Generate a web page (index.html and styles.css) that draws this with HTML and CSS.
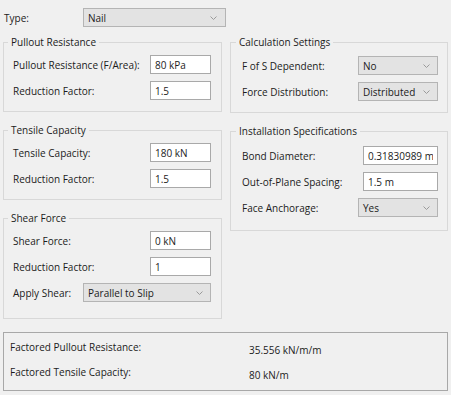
FILE: index.html
```html
<!DOCTYPE html>
<html lang="en">
<head>
    <meta charset="UTF-8">
    <title>Support Properties - Nail</title>
    <link rel="stylesheet" href="styles.css">
</head>
<body>
    <div class="dialog">
        <div class="type-row">
            <label class="type-label">Type:</label>
            <div class="combo combo-type"><span>Nail</span><svg class="chev" width="7" height="4" viewBox="0 0 7 4"><path d="M0.5 0.5 L3.5 3.5 L6.5 0.5" fill="none" stroke="#9a9a9a" stroke-width="1"/></svg></div>
        </div>

        <div class="columns">
            <div class="column column-left">
                <fieldset class="group">
                    <legend>Pullout Resistance</legend>
                    <div class="field">
                        <label>Pullout Resistance (F/Area):</label>
                        <input class="text-box" type="text" value="80 kPa">
                    </div>
                    <div class="field">
                        <label>Reduction Factor:</label>
                        <input class="text-box" type="text" value="1.5">
                    </div>
                </fieldset>

                <fieldset class="group">
                    <legend>Tensile Capacity</legend>
                    <div class="field">
                        <label>Tensile Capacity:</label>
                        <input class="text-box" type="text" value="180 kN">
                    </div>
                    <div class="field">
                        <label>Reduction Factor:</label>
                        <input class="text-box" type="text" value="1.5">
                    </div>
                </fieldset>

                <fieldset class="group group-shear">
                    <legend>Shear Force</legend>
                    <div class="field">
                        <label>Shear Force:</label>
                        <input class="text-box" type="text" value="0 kN">
                    </div>
                    <div class="field">
                        <label>Reduction Factor:</label>
                        <input class="text-box" type="text" value="1">
                    </div>
                    <div class="field">
                        <label>Apply Shear:</label>
                        <div class="combo combo-wide"><span>Parallel to Slip</span><svg class="chev" width="7" height="4" viewBox="0 0 7 4"><path d="M0.5 0.5 L3.5 3.5 L6.5 0.5" fill="none" stroke="#9a9a9a" stroke-width="1"/></svg></div>
                    </div>
                </fieldset>
            </div>

            <div class="column column-right">
                <fieldset class="group">
                    <legend>Calculation Settings</legend>
                    <div class="field">
                        <label>F of S Dependent:</label>
                        <div class="combo combo-small"><span>No</span><svg class="chev" width="7" height="4" viewBox="0 0 7 4"><path d="M0.5 0.5 L3.5 3.5 L6.5 0.5" fill="none" stroke="#9a9a9a" stroke-width="1"/></svg></div>
                    </div>
                    <div class="field">
                        <label>Force Distribution:</label>
                        <div class="combo combo-small"><span>Distributed</span><svg class="chev" width="7" height="4" viewBox="0 0 7 4"><path d="M0.5 0.5 L3.5 3.5 L6.5 0.5" fill="none" stroke="#9a9a9a" stroke-width="1"/></svg></div>
                    </div>
                </fieldset>

                <fieldset class="group group-install">
                    <legend>Installation Specifications</legend>
                    <div class="field">
                        <label>Bond Diameter:</label>
                        <input class="text-box text-box-wide" type="text" value="0.31830989 m">
                    </div>
                    <div class="field">
                        <label>Out-of-Plane Spacing:</label>
                        <input class="text-box text-box-wide" type="text" value="1.5 m">
                    </div>
                    <div class="field">
                        <label>Face Anchorage:</label>
                        <div class="combo combo-small"><span>Yes</span><svg class="chev" width="7" height="4" viewBox="0 0 7 4"><path d="M0.5 0.5 L3.5 3.5 L6.5 0.5" fill="none" stroke="#9a9a9a" stroke-width="1"/></svg></div>
                    </div>
                </fieldset>
            </div>
        </div>

        <div class="results">
            <div class="result-label">Factored Pullout Resistance:</div>
            <div class="result-value">35.556 kN/m/m</div>
            <div class="result-label">Factored Tensile Capacity:</div>
            <div class="result-value">80 kN/m</div>
        </div>
    </div>
</body>
</html>
```

FILE: styles.css
```css
body {
    margin: 0;
    background-color: #f0f0f0;
    font-family: 'Open Sans', 'Liberation Sans', sans-serif;
    font-size: 10px;
    color: #1b1b1b;
}

.dialog {
    width: 445px;
    padding: 8px 3px 0 3px;
}

/* Type selector on top */
.type-row {
    display: flex;
    align-items: center;
    height: 19px;
}

.type-label {
    width: 79px;
    padding-left: 1px;
}

.combo {
    display: flex;
    align-items: center;
    justify-content: space-between;
    box-sizing: border-box;
    height: 19px;
    padding: 0 7px 0 4px;
    background-color: #e3e3e3;
    border: 1px solid #b4b4b4;
    color: #1b1b1b;
}

.combo-type {
    width: 143px;
    padding-right: 8px;
}

.combo-small {
    width: 80px;
}

.combo-wide {
    width: 128px;
}

.chev {
    display: block;
}

/* Two columns of group boxes */
.columns {
    display: flex;
    gap: 8px;
    margin-top: 8px;
}

.column {
    display: flex;
    flex-direction: column;
    gap: 11px;
}

.column-left {
    width: 219px;
}

.column-right {
    width: 218px;
}

.group {
    margin: 0;
    min-width: 0;
    border: 1px solid #d8d8d8;
    padding: 6px 10px 11px 9px;
}

.column-right .group {
    padding: 7px 9px 11px 11px;
}

.group legend {
    line-height: 14px;
    padding: 0 3px;
    margin-left: -5px;
}

.column-right .group legend {
    margin-left: -6px;
}

.group-shear {
    padding-bottom: 16px;
}

.column-right .group-install {
    padding-top: 8px;
    padding-bottom: 13px;
}

.field {
    display: flex;
    align-items: center;
    justify-content: space-between;
    height: 19px;
}

.field + .field {
    margin-top: 7px;
}

.text-box {
    box-sizing: border-box;
    width: 61px;
    height: 19px;
    margin: 0;
    padding: 0 4px;
    border: 1px solid #a9a9a9;
    background-color: #fff;
    font-family: inherit;
    font-size: 10px;
    color: #1b1b1b;
    outline: none;
}

.text-box-wide {
    width: 75px;
}

/* Results box */
.results {
    display: grid;
    grid-template-columns: 239px 1fr;
    align-content: start;
    row-gap: 8px;
    margin-top: 13px;
    height: 59px;
    box-sizing: border-box;
    padding: 7px 6px 0 6px;
    border: 1px solid #a8a8a8;
}

.result-label,
.result-value {
    line-height: 14px;
}

.result-value {
    padding-top: 3px;
}
```
